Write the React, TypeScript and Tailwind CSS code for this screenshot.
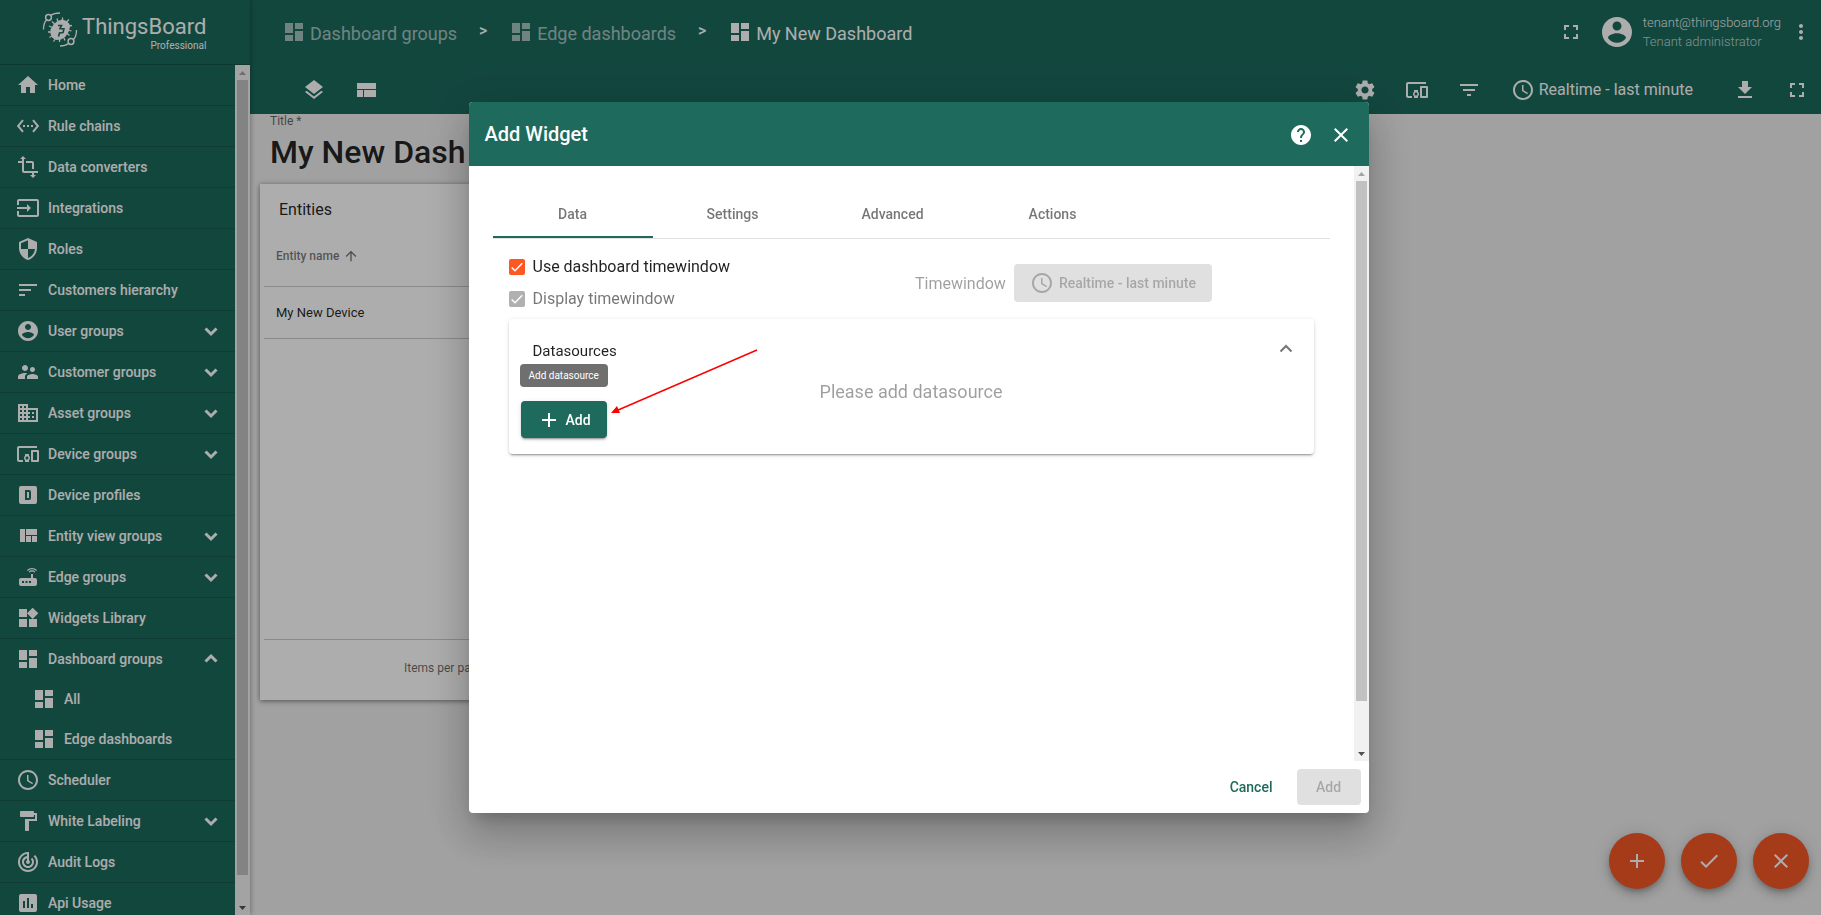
import type { ReactNode } from "react";
import clsx from "clsx";
import type { IconType } from "react-icons";
import {
  MdAdd,
  MdArrowUpward,
  MdCheck,
  MdClose,
  MdDashboard,
  MdDevicesOther,
  MdDomain,
  MdFileDownload,
  MdFilterList,
  MdFormatPaint,
  MdFullscreen,
  MdHelp,
  MdHome,
  MdInput,
  MdInsertChart,
  MdLayers,
  MdMoreVert,
  MdRouter,
  MdSchedule,
  MdSecurity,
  MdSettings,
  MdSettingsEthernet,
  MdSort,
  MdSupervisorAccount,
  MdTrackChanges,
  MdTransform,
  MdWidgets,
} from "react-icons/md";

type IconProps = { className?: string };

function PathIcon({ d, className }: { d: string; className?: string }) {
  return (
    <svg viewBox="0 0 24 24" fill="currentColor" className={className} aria-hidden="true">
      <path d={d} fillRule="evenodd" />
    </svg>
  );
}

const AccountIcon = ({ className }: IconProps) => (
  <PathIcon
    className={className}
    d="M12 2C6.48 2 2 6.48 2 12s4.48 10 10 10 10-4.48 10-10S17.52 2 12 2zm0 3c1.66 0 3 1.34 3 3s-1.34 3-3 3-3-1.34-3-3 1.34-3 3-3zm0 14.2c-2.5 0-4.71-1.28-6-3.22.03-1.99 4-3.08 6-3.08 1.99 0 5.97 1.09 6 3.08-1.29 1.94-3.5 3.22-6 3.22z"
  />
);

const ProfileIcon = ({ className }: IconProps) => (
  <PathIcon
    className={className}
    d="M5 3a2 2 0 0 0-2 2v14a2 2 0 0 0 2 2h14a2 2 0 0 0 2-2V5a2 2 0 0 0-2-2H5zM9 7h4a2 2 0 0 1 2 2v6a2 2 0 0 1-2 2H9V7zM11 9v6h2V9h-2z"
  />
);

const QuiltIcon = ({ className }: IconProps) => (
  <PathIcon
    className={className}
    d="M10 18h5v-6h-5v6zm-6 0h5V5H4v13zm12 0h5v-6h-5v6zM10 5v6h11V5H10z"
  />
);

const CompactIcon = ({ className }: IconProps) => (
  <PathIcon className={className} d="M3 19h6v-7H3v7zm7 0h12v-7H10v7zM3 5v6h19V5H3z" />
);

function Chevron({ up, className }: { up?: boolean; className?: string }) {
  return (
    <svg
      viewBox="0 0 24 24"
      fill="none"
      stroke="currentColor"
      className={clsx(className, up && "rotate-180")}
      aria-hidden="true"
    >
      <path d="M6.5 9.5 12 15l5.500-5.500" />
    </svg>
  );
}

type MenuItem = {
  label: string;
  icon: IconType | ((p: IconProps) => ReactNode);
  toggle?: "open" | "closed";
  children?: string[];
};

const menu: MenuItem[] = [
  { label: "Home", icon: MdHome },
  { label: "Rule chains", icon: MdSettingsEthernet },
  { label: "Data converters", icon: MdTransform },
  { label: "Integrations", icon: MdInput },
  { label: "Roles", icon: MdSecurity },
  { label: "Customers hierarchy", icon: MdSort },
  { label: "User groups", icon: AccountIcon, toggle: "closed" },
  { label: "Customer groups", icon: MdSupervisorAccount, toggle: "closed" },
  { label: "Asset groups", icon: MdDomain, toggle: "closed" },
  { label: "Device groups", icon: MdDevicesOther, toggle: "closed" },
  { label: "Device profiles", icon: ProfileIcon },
  { label: "Entity view groups", icon: QuiltIcon, toggle: "closed" },
  { label: "Edge groups", icon: MdRouter, toggle: "closed" },
  { label: "Widgets Library", icon: MdWidgets },
  {
    label: "Dashboard groups",
    icon: MdDashboard,
    toggle: "open",
    children: ["All", "Edge dashboards"],
  },
  { label: "Scheduler", icon: MdSchedule },
  { label: "White Labeling", icon: MdFormatPaint, toggle: "closed" },
  { label: "Audit Logs", icon: MdTrackChanges },
  { label: "Api Usage", icon: MdInsertChart },
];

function ScrollBar({ thumb }: { thumb: string }) {
  return (
    <div className="flex w-[15px] shrink-0 flex-col items-center bg-[#f1f1f1]" aria-hidden="true">
      <svg viewBox="0 0 15 15" className="size-[15px] shrink-0">
        <path d="M4 10h7L7.500 6z" fill="#a3a3a3" />
      </svg>
      <div className="min-h-0 w-[11px] flex-1">
        <div className={clsx("w-full bg-[#c1c1c1]", thumb)} />
      </div>
      <svg viewBox="0 0 15 15" className="size-[15px] shrink-0">
        <path d="M4 6h7l-3.500 4z" fill="#505050" />
      </svg>
    </div>
  );
}

function Logo() {
  return (
    <div className="flex h-[65px] shrink-0 items-center border-b border-black/20 pl-[42px] text-white">
      <svg viewBox="0 0 36 36" className="mb-1 size-9" fill="none" stroke="currentColor" aria-hidden="true">
        <path
          d="M15.500 9 20.500 7.500 24.500 9 27.500 12 28 15 26.500 20 23.500 24.500 19 27.500 14.500 28 10.500 26 8.500 22 8.500 17.500 11.500 12.500z"
          fill="currentColor"
          stroke="none"
        />
        <path
          strokeWidth="1.300"
          d="M12.500 12 10 9.500M16 10l-1-3.500M20.500 9V5.500M24.500 10l2.500-2.500M26.500 14l3.500-.5M26 18l3.500 1M24.500 21l3 2.500M21.500 25l1.500 3.500M17.500 26v4M13.500 26.500 11.500 29.500M10.500 23.500 7.500 25.500M10 20H6M10.500 15.500 7 14"
        />
        <path
          className="text-[#1b695c]"
          strokeWidth="1.600"
          d="M16 13.500h3.500l-1.500 3 4 .5-1 3.500-3.500.5-1 3.500"
        />
        <path
          strokeWidth="1.300"
          d="M1.500 17.500C1.500 13 2.500 10 4.500 8M8.500 3.500C11 1.700 14 1 18 1M34.500 18c0 4.500-1 7.500-3 9.500M26.500 31.500c-2.500 2-5 2.500-8.500 2.500"
        />
        <circle cx="6.500" cy="5.500" r="2.900" strokeWidth="1.500" />
        <circle cx="29" cy="29.500" r="2.900" strokeWidth="1.500" />
      </svg>
      <div className="ml-1 flex flex-col items-end pt-1">
        <span className="text-[22px] leading-6">ThingsBoard</span>
        <span className="text-[10px] leading-[14px]">Professional</span>
      </div>
    </div>
  );
}

function Sidebar() {
  return (
    <aside className="z-10 flex w-[250px] shrink-0 flex-col bg-[#1b695c] text-white shadow-[0_0_5px_rgba(0,0,0,0.4)]">
      <Logo />
      <div className="flex min-h-0 flex-1">
        <nav className="min-w-0 flex-1 overflow-hidden">
          {menu.map(({ label, icon: Icon, toggle, children }) => (
            <div key={label} className="border-b border-black/15">
              <a href="#" className="flex h-10 items-center gap-2 pr-3 pl-4 text-sm font-medium">
                <Icon className="size-6" />
                <span className="flex-1">{label}</span>
                {toggle && <Chevron up={toggle === "open"} className="size-6 stroke-3" />}
              </a>
              {children?.map((child) => (
                <a
                  key={child}
                  href="#"
                  className="flex h-10 items-center gap-2 pl-8 text-sm font-medium"
                >
                  <MdDashboard className="size-6" />
                  {child}
                </a>
              ))}
            </div>
          ))}
        </nav>
        <ScrollBar thumb="h-[97%]" />
      </div>
    </aside>
  );
}

function IconButton({ label, children }: { label: string; children: ReactNode }) {
  return (
    <button type="button" aria-label={label} className="flex size-6 items-center justify-center">
      {children}
    </button>
  );
}

function Header() {
  const crumbs = ["Dashboard groups", "Edge dashboards", "My New Dashboard"];
  return (
    <header className="bg-[#1b695c] text-white">
      <div className="flex h-16 items-center justify-between pr-2 pl-8">
        <nav className="flex items-center text-lg">
          {crumbs.map((crumb, i) => (
            <div key={crumb} className="flex items-center">
              {i > 0 && <span className="w-[52px] pb-0.5 text-center text-base font-medium">&gt;</span>}
              <a
                href="#"
                className={clsx("flex items-center gap-1", i < crumbs.length - 1 && "opacity-60")}
              >
                <MdDashboard className="size-6" />
                <span className="pt-1">{crumb}</span>
              </a>
            </div>
          ))}
        </nav>
        <div className="flex items-center">
          <IconButton label="Fullscreen">
            <MdFullscreen className="size-6" />
          </IconButton>
          <AccountIcon className="ml-4 size-9" />
          <div className="mr-2 ml-2 flex flex-col text-[13px] leading-[19px] font-light">
            <span className="opacity-90">tenant@thingsboard.org</span>
            <span className="opacity-70">Tenant administrator</span>
          </div>
          <IconButton label="More">
            <MdMoreVert className="size-6" />
          </IconButton>
        </div>
      </div>
      <div className="flex h-[50px] items-center justify-between pt-0.5 pr-3 pl-[52px]">
        <div className="flex gap-7">
          <IconButton label="Manage dashboard states">
            <MdLayers className="size-6" />
          </IconButton>
          <IconButton label="Manage layouts">
            <CompactIcon className="size-6" />
          </IconButton>
        </div>
        <div className="flex items-center gap-7">
          <IconButton label="Settings">
            <MdSettings className="size-6" />
          </IconButton>
          <IconButton label="Entity aliases">
            <MdDevicesOther className="size-6" />
          </IconButton>
          <IconButton label="Filters">
            <MdFilterList className="size-6" />
          </IconButton>
          <button type="button" className="ml-0.5 flex items-center gap-1 text-base">
            <MdSchedule className="size-6" />
            Realtime - last minute
          </button>
          <div className="ml-3 flex gap-7">
            <IconButton label="Export dashboard">
              <MdFileDownload className="size-6" />
            </IconButton>
            <IconButton label="Expand">
              <MdFullscreen className="size-6" />
            </IconButton>
          </div>
        </div>
      </div>
    </header>
  );
}

function EntitiesWidget() {
  return (
    <section className="ml-[10px] flex h-[516px] w-[600px] flex-col bg-white px-1 shadow-[0_1px_5px_rgba(0,0,0,0.5)]">
      <h2 className="px-[15px] pt-3 text-base leading-7 text-black/87">Entities</h2>
      <table className="w-full border-collapse text-left">
        <thead>
          <tr className="h-[62px] border-b border-black/20 text-xs text-black/54">
            <th className="px-3 pt-0.5 font-medium">
              <span className="flex items-center gap-1">
                Entity name
                <MdArrowUpward className="size-4" />
              </span>
            </th>
          </tr>
        </thead>
        <tbody>
          <tr className="h-[52px] border-b border-black/20 text-[13px] text-black/87">
            <td className="px-3 pt-0.5">My New Device</td>
          </tr>
        </tbody>
      </table>
      <div className="mt-auto flex h-[61px] items-center border-t border-black/20 pb-1 pl-[140px] text-xs text-black/60">
        Items per page:
      </div>
    </section>
  );
}

function Fab({ label, children }: { label: string; children: ReactNode }) {
  return (
    <button
      type="button"
      aria-label={label}
      className="flex size-14 items-center justify-center rounded-full bg-[#f45724] text-white shadow-[0_3px_5px_-1px_rgba(0,0,0,0.2),0_6px_10px_rgba(0,0,0,0.14),0_1px_18px_rgba(0,0,0,0.12)]"
    >
      {children}
    </button>
  );
}

function DashboardPage() {
  return (
    <main className="flex min-w-0 flex-1 flex-col">
      <Header />
      <div className="flex flex-1 flex-col bg-[#ededed]">
        <div className="flex h-[70px] flex-col pl-5">
          <label htmlFor="dashboard-title" className="text-xs leading-[14px] text-black/60">
            Title *
          </label>
          <input
            id="dashboard-title"
            defaultValue="My New Dashboard"
            className="w-[195px] text-[32px] leading-[48px] font-medium text-black/87 outline-none"
          />
        </div>
        <EntitiesWidget />
        <div className="mt-auto flex justify-end gap-4 pr-3 pb-[26px]">
          <Fab label="Add new widget">
            <MdAdd className="size-6" />
          </Fab>
          <Fab label="Apply changes">
            <MdCheck className="size-6" />
          </Fab>
          <Fab label="Decline changes">
            <MdClose className="size-6" />
          </Fab>
        </div>
      </div>
    </main>
  );
}

function Checkbox({ label, disabled }: { label: string; disabled?: boolean }) {
  return (
    <label
      className={clsx("flex h-8 items-center gap-2 text-base", disabled ? "text-black/54" : "text-black/87")}
    >
      <span className="grid size-4">
        <input
          type="checkbox"
          defaultChecked
          disabled={disabled}
          className="col-start-1 row-start-1 size-4 appearance-none rounded-[2px] bg-[#b0b0b0] enabled:bg-[#ff5722]"
        />
        <svg
          viewBox="0 0 16 16"
          className="pointer-events-none col-start-1 row-start-1 size-4 text-white"
          fill="none"
          stroke="currentColor"
          strokeWidth="1.400"
          aria-hidden="true"
        >
          <path d="M2.700 8.500 6 11.800 13.300 4.300" />
        </svg>
      </span>
      {label}
    </label>
  );
}

function Datasources() {
  return (
    <section className="relative flex h-[135px] flex-col rounded bg-white shadow-[0_3px_1px_-2px_rgba(0,0,0,0.2),0_2px_2px_rgba(0,0,0,0.14),0_1px_5px_rgba(0,0,0,0.12)]">
      <div className="flex items-center justify-between pt-4 pr-4 pl-6">
        <h3 className="pt-1 text-[15px] leading-6 text-black/87">Datasources</h3>
        <button type="button" aria-label="Collapse datasources" className="text-black/54">
          <Chevron up className="size-6 stroke-2" />
        </button>
      </div>
      <p className="pt-5 text-center text-lg leading-[18px] text-black/38">Please add datasource</p>
      <button
        type="button"
        className="mt-auto mb-4 ml-3 flex h-[37px] w-[86px] shrink-0 items-center gap-[5px] rounded bg-[#1e6a5c] pl-4 text-sm font-medium text-white shadow-[0_3px_1px_-2px_rgba(0,0,0,0.2),0_2px_2px_rgba(0,0,0,0.14),0_1px_5px_rgba(0,0,0,0.12)]"
      >
        <MdAdd className="size-6" />
        Add
      </button>
      <span
        role="tooltip"
        className="absolute top-[45px] left-[11px] rounded bg-[#6f6f6f] px-[9px] text-[10px] leading-[23px] text-white"
      >
        Add datasource
      </span>
      <svg
        viewBox="0 0 148 66"
        className="pointer-events-none absolute top-[30px] left-[102px] h-[66px] w-[148px]"
        aria-hidden="true"
      >
        <path d="M146 1 6 61.500" stroke="#f00" strokeWidth="1.500" />
        <path d="M0 64 6 57l3 7z" fill="#f00" />
      </svg>
    </section>
  );
}

function AddWidgetDialog() {
  const tabs = ["Data", "Settings", "Advanced", "Actions"];
  return (
    <div
      role="dialog"
      aria-labelledby="dialog-title"
      className="flex w-[900px] flex-col overflow-hidden rounded bg-white shadow-[0_11px_15px_-7px_rgba(0,0,0,0.2),0_24px_38px_3px_rgba(0,0,0,0.14),0_9px_46px_8px_rgba(0,0,0,0.12)]"
    >
      <div className="flex h-16 items-center gap-4 bg-[#1e6a5c] px-4 text-white">
        <h1 id="dialog-title" className="flex-1 text-xl font-medium">
          Add Widget
        </h1>
        <div className="flex gap-4 pt-0.5">
          <IconButton label="Help">
            <MdHelp className="size-6" />
          </IconButton>
          <IconButton label="Close">
            <MdClose className="size-6" />
          </IconButton>
        </div>
      </div>
      <div className="flex h-[65vh]">
        <div className="min-w-0 flex-1 p-6">
          <div role="tablist" className="flex h-[49px] border-b border-black/12">
            {tabs.map((tab, i) => (
              <button
                key={tab}
                type="button"
                role="tab"
                aria-selected={i === 0}
                className={clsx(
                  "h-12 w-40 border-b-2 pt-0.5 text-sm font-medium text-black/54",
                  i === 0 ? "border-[#1e6a5c]" : "border-transparent",
                )}
              >
                {tab}
              </button>
            ))}
          </div>
          <div className="px-4 pt-3">
            <div className="flex items-center pb-1">
              <div className="w-1/2">
                <Checkbox label="Use dashboard timewindow" />
                <Checkbox label="Display timewindow" disabled />
              </div>
              <div className="flex w-1/2 items-center gap-2 pl-1 text-base text-black/38">
                <span className="pt-px">Timewindow</span>
                <button
                  type="button"
                  disabled
                  className="flex h-[38px] items-center gap-[5px] rounded bg-[#e0e0e0] px-4 text-sm font-medium text-black/26"
                >
                  <MdSchedule className="size-6" />
                  Realtime - last minute
                </button>
              </div>
            </div>
            <Datasources />
          </div>
        </div>
        <ScrollBar thumb="h-[92%]" />
      </div>
      <div className="flex h-[52px] items-center justify-end gap-2 px-2 text-sm font-medium">
        <button type="button" className="h-9 px-4 text-[#1e6a5c]">
          Cancel
        </button>
        <button type="button" disabled className="h-9 w-16 rounded bg-[#e0e0e0] text-black/26">
          Add
        </button>
      </div>
    </div>
  );
}

export default function App() {
  return (
    <div className="flex h-screen overflow-hidden font-[Roboto,sans-serif]">
      <Sidebar />
      <DashboardPage />
      <div className="fixed inset-0 z-20 flex items-center justify-center bg-black/32 pl-4">
        <AddWidgetDialog />
      </div>
    </div>
  );
}
